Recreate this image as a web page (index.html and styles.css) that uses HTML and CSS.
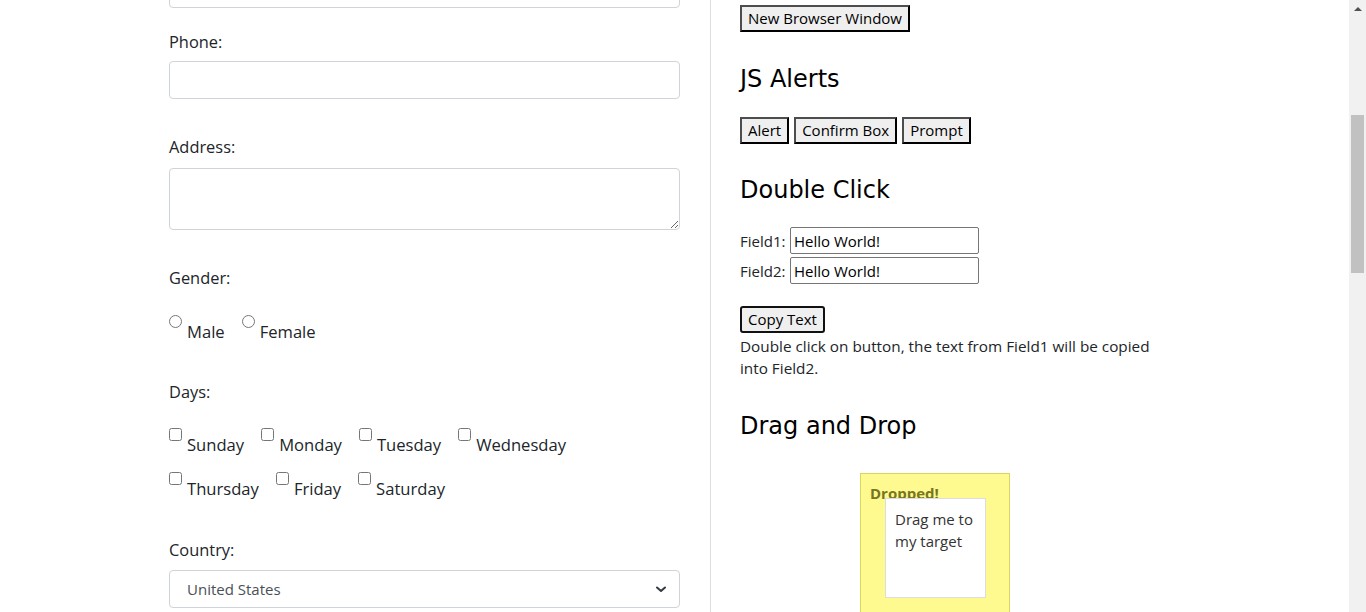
FILE: index.html
```html
<!DOCTYPE html>
<html>
<head>
<meta charset="utf-8">
<link rel="stylesheet" href="styles.css">
</head>
<body>
<div class="page">
  <main class="main">
    <section class="left">
      <div class="ctl prev"></div>
      <label class="lbl first">Phone:</label>
      <input class="ctl" type="text">
      <label class="lbl">Address:</label>
      <textarea class="ctl ta"></textarea>
      <label class="lbl">Gender:</label>
      <div class="opts">
        <label class="opt"><input type="radio" name="g"><span>Male</span></label>
        <label class="opt"><input type="radio" name="g"><span>Female</span></label>
      </div>
      <label class="lbl">Days:</label>
      <div class="opts days">
        <label class="opt"><input type="checkbox"><span>Sunday</span></label>
        <label class="opt"><input type="checkbox"><span>Monday</span></label>
        <label class="opt"><input type="checkbox"><span>Tuesday</span></label>
        <label class="opt"><input type="checkbox"><span>Wednesday</span></label>
      </div>
      <div class="opts row2">
        <label class="opt"><input type="checkbox"><span>Thursday</span></label>
        <label class="opt"><input type="checkbox"><span>Friday</span></label>
        <label class="opt"><input type="checkbox"><span>Saturday</span></label>
      </div>
      <label class="lbl country">Country:</label>
      <div class="ctl sel">
        <span>United States</span>
        <svg class="chev" width="12" height="12" viewBox="0 0 12 12"><path d="M2 4.5 L6 8 L10 4.5" fill="none" stroke="#343a40" stroke-width="2" stroke-linecap="round" stroke-linejoin="round"/></svg>
      </div>
    </section>
    <section class="right">
      <div><button class="btn">New Browser Window</button></div>
      <h2 class="h h-alerts">JS Alerts</h2>
      <div class="btnrow">
        <button class="btn">Alert</button>
        <button class="btn">Confirm Box</button>
        <button class="btn">Prompt</button>
      </div>
      <h2 class="h h-dbl">Double Click</h2>
      <div class="field"><span class="flbl">Field1:</span><input class="fin" type="text" value="Hello World!"></div>
      <div class="field f2"><span class="flbl">Field2:</span><input class="fin" type="text" value="Hello World!"></div>
      <div><button class="btn copy">Copy Text</button></div>
      <p class="note">Double click on button, the text from Field1 will be copied into Field2.</p>
      <h2 class="h h-dd">Drag and Drop</h2>
      <div class="dnd">
        <div class="drop">
          <p class="dropped">Dropped!</p>
          <div class="drag">Drag me to my target</div>
        </div>
      </div>
    </section>
  </main>
  <div class="scrollbar">
    <div class="arrow"></div>
    <div class="thumb"></div>
  </div>
</div>
</body>
</html>
```
FILE: styles.css
```css
* { box-sizing: border-box; }
html, body { margin: 0; padding: 0; height: 100%; overflow: hidden; background: #fff; }
body { font-family: "Open Sans", "Noto Sans", sans-serif; color: #212529; }

.page { display: flex; height: 612px; }
.main { flex: 1; display: flex; padding-left: 169px; }
.scrollbar { width: 17px; background: #f1f1f1; display: flex; flex-direction: column; align-items: center; }
.arrow { width: 0; height: 0; border-left: 4px solid transparent; border-right: 4px solid transparent; border-bottom: 4px solid #505050; margin-top: 7px; }
.thumb { width: 13px; height: 158px; background: #c1c1c1; margin-top: 104px; }

.left { width: 542px; padding-right: 30px; border-right: 1px solid #dedede; display: flex; flex-direction: column; }
.right { padding-left: 29px; padding-top: 5px; width: 460px; display: flex; flex-direction: column; align-items: flex-start; }

.ctl { border: 1px solid #ced4da; border-radius: 4px; background: #fff; width: 511px; height: 38px; display: block; font: inherit; }
.prev { margin-top: -30px; }
.lbl { display: block; font-size: 16.4px; line-height: 24px; margin-top: 36px; margin-bottom: 8px; }
.lbl.first { margin-top: 22px; margin-bottom: 7px; }
.ta { height: 62px; resize: vertical; margin-top: 1px; }
.opts { display: flex; margin-top: 17px; }
.opts.days { margin-top: 16px; }
.opts.row2 { margin-top: 15px; }
.opt { display: inline-flex; align-items: flex-start; margin-right: 17px; font-size: 16.6px; line-height: 24px; }
.opt input { margin: 0 5px 0 0; width: 13px; height: 13px; }
.opt span { margin-top: 5px; }
.country { margin-top: 37px; }
.sel { display: flex; align-items: center; justify-content: space-between; padding: 0 12px 0 17px; font-size: 15px; color: #495057; }
.chev { display: block; }

.btn { font-family: "Open Sans", "Noto Sans", sans-serif; font-size: 15px; line-height: 20px; color: #000; background: #efefef; padding: 1px 6px 2px; border: 2px solid; border-color: #4d4d4d #000 #000 #4d4d4d; border-radius: 0; margin: 0; height: 27px; }
.btn.copy { border: 2px solid #111; border-radius: 3px; }
.btnrow { display: flex; gap: 5px; }

.h { font-family: "DejaVu Sans", Verdana, sans-serif; font-weight: normal; font-size: 24px; line-height: 28px; margin: 0; color: #000; }
.h-alerts { margin-top: 33px; margin-bottom: 24px; }
.h-dbl { margin-top: 32px; margin-bottom: 23px; }
.h-dd { margin-top: 33px; margin-bottom: 33px; }

.field { display: flex; align-items: center; font-size: 15px; }
.field.f2 { margin-top: 3px; }
.flbl { width: 50px; }
.fin { width: 189px; height: 27px; border: 1px solid #767676; border-radius: 2px; padding: 0 3px; font: inherit; font-size: 15px; color: #000; }
.copy { margin-top: 22px; }
.note { margin: 3px 0 0; font-size: 15.3px; line-height: 21.5px; width: 430px; }

.dnd { padding-left: 120px; }
.drop { position: relative; width: 150px; height: 150px; border: 1px solid #dad55e; background: #fffa90; color: #777620; padding: 7px 9px; }
.dropped { margin: 0; font-weight: bold; font-size: 15px; line-height: 24px; }
.drag { position: absolute; left: 24px; top: 24px; width: 101px; height: 100px; border: 1px solid #dddddd; background: #fff; color: #333; padding: 9px; font-size: 15px; line-height: 22px; }
```
